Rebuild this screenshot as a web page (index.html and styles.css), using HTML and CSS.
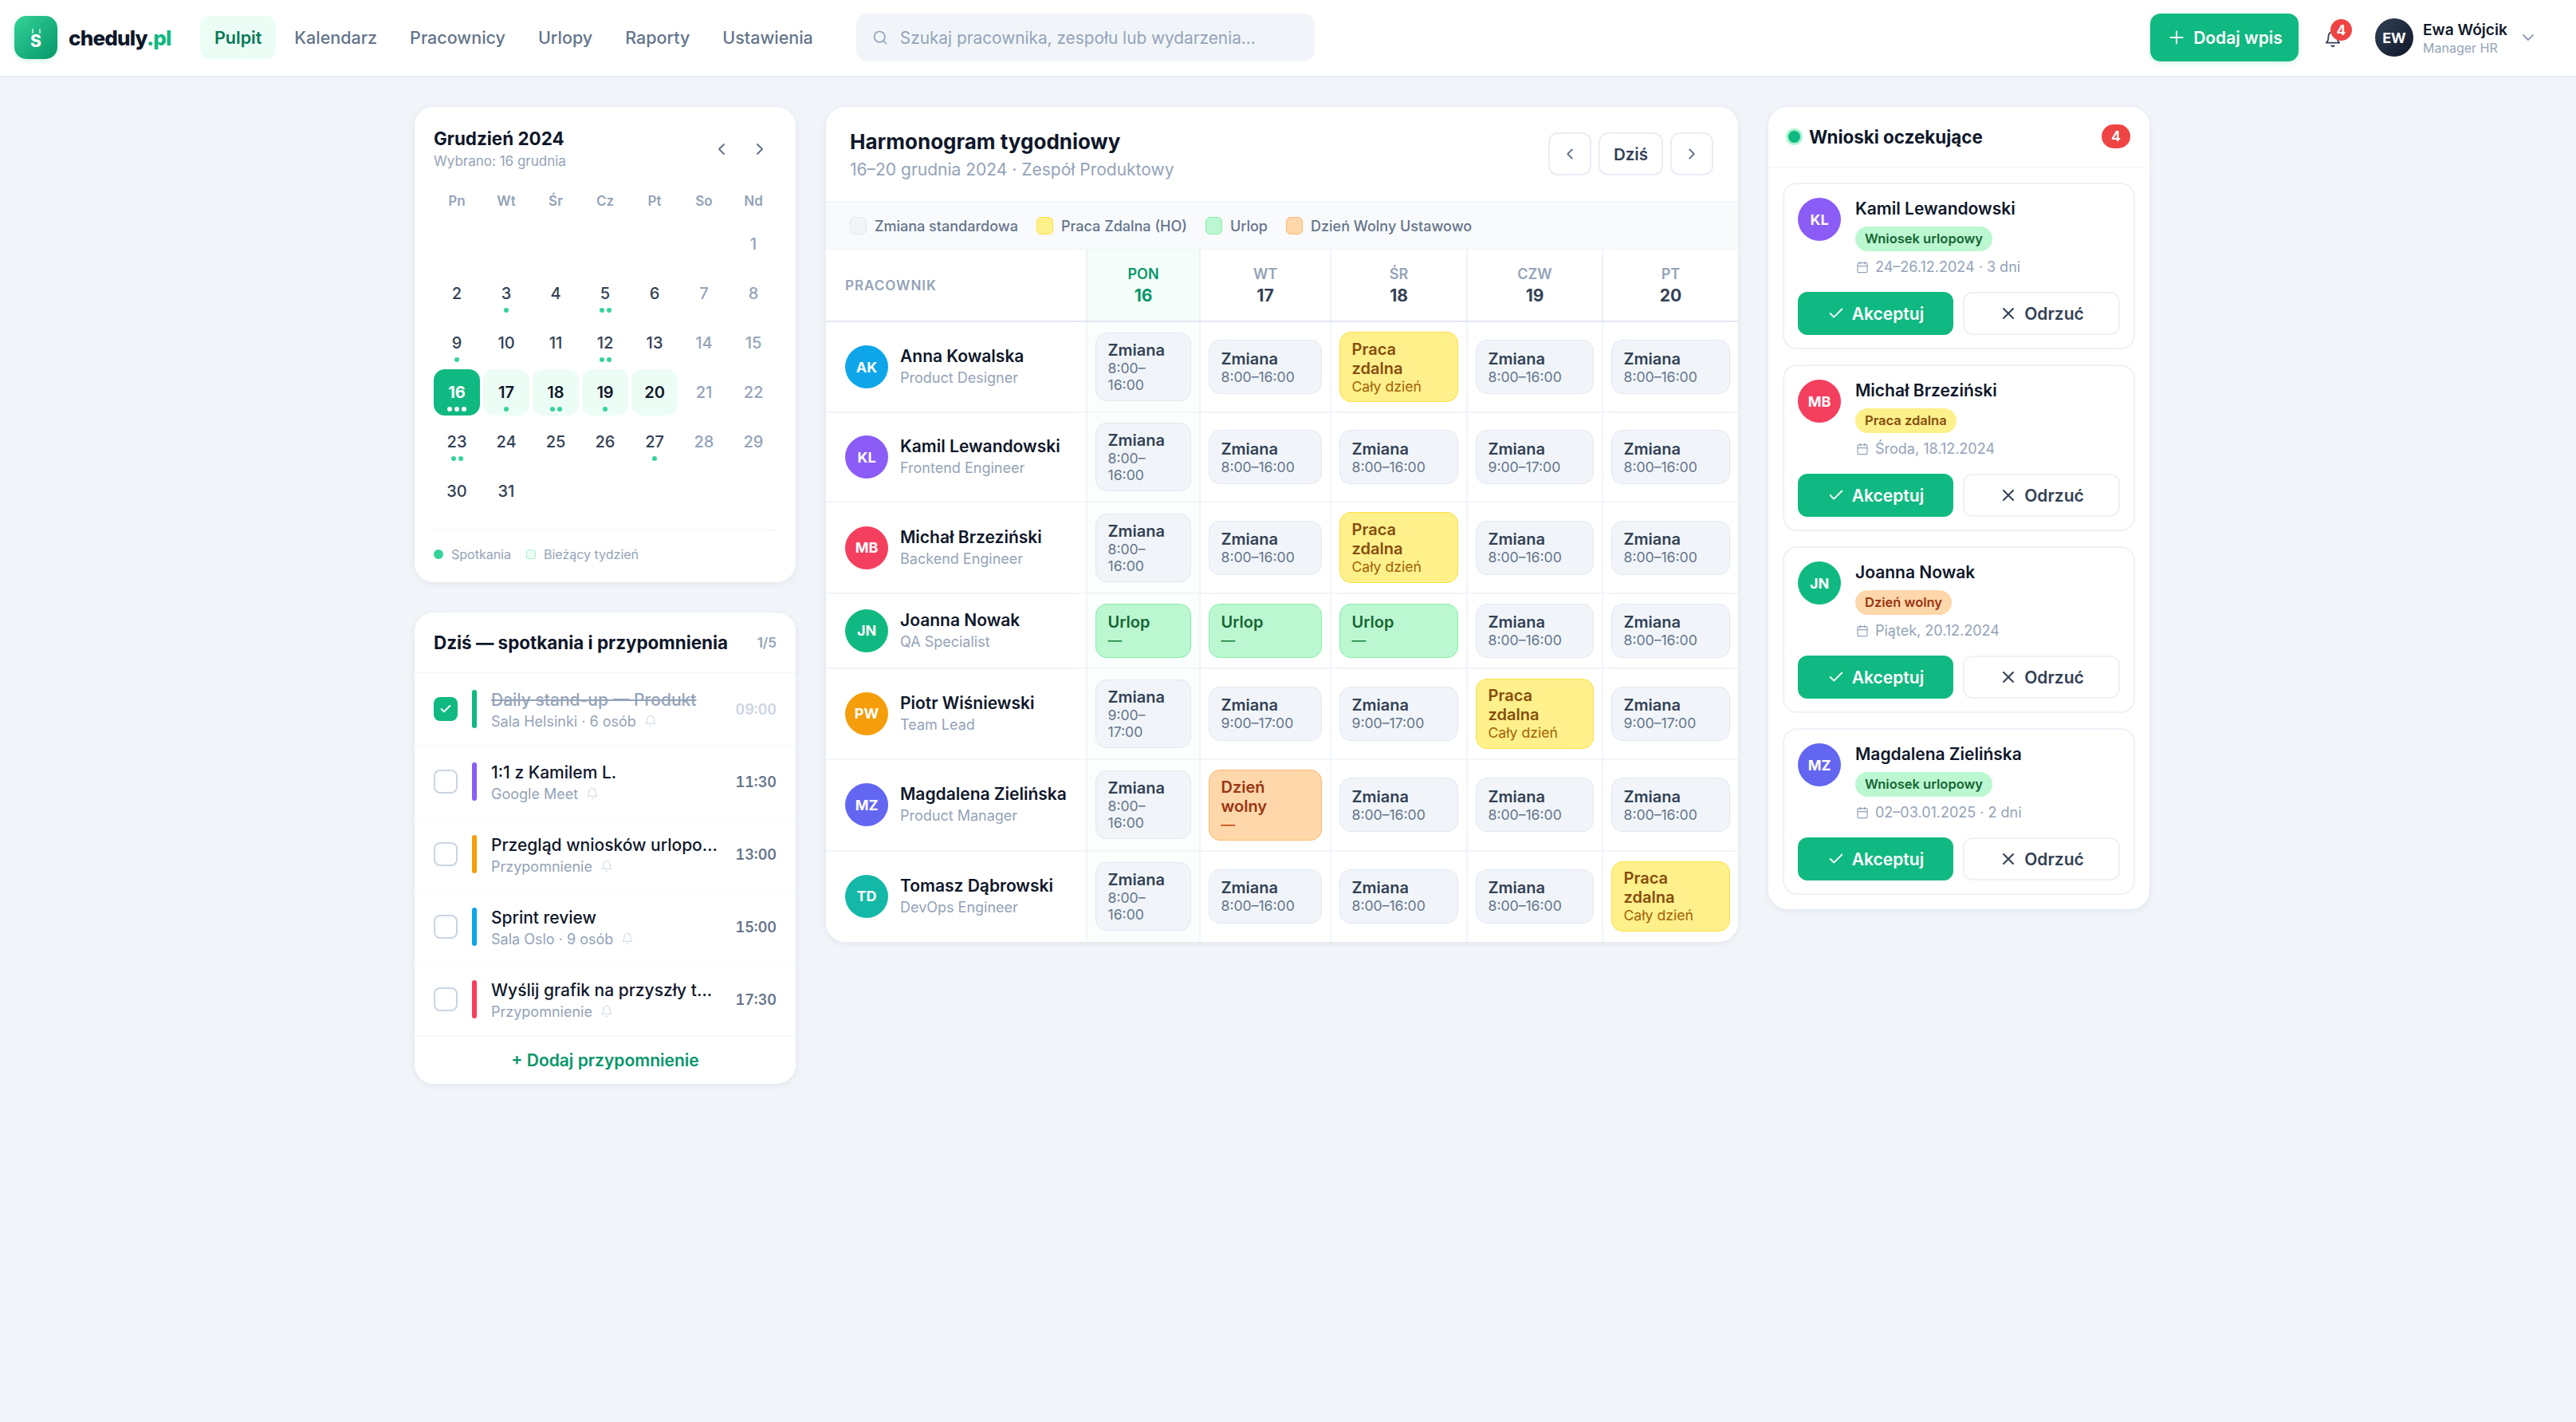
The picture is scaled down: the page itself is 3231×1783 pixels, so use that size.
FILE: index.html
```html
<!DOCTYPE html>
<html lang="pl">
  <head>
    <meta charset="UTF-8" />
    <meta name="viewport" content="width=device-width, initial-scale=1.0" />
    <title>cheduly.pl</title>
    <link rel="stylesheet" href="styles.css">
  </head>
  <body>
    <svg class="sprite" width="0" height="0">
      <symbol id="i-bell" viewBox="0 0 24 24"><path d="M6 8a6 6 0 0 1 12 0c0 7 3 9 3 9H3s3-2 3-9"/><path d="M10.3 21a1.9 1.9 0 0 0 3.4 0"/></symbol>
      <symbol id="i-cal" viewBox="0 0 24 24"><rect x="3" y="4" width="18" height="18" rx="2"/><path d="M16 2v4M8 2v4M3 10h18"/></symbol>
      <symbol id="i-check" viewBox="0 0 24 24"><path d="M20 6 9 17l-5-5"/></symbol>
      <symbol id="i-x" viewBox="0 0 24 24"><path d="M18 6 6 18M6 6l12 12"/></symbol>
      <symbol id="i-left" viewBox="0 0 24 24"><path d="m15 18-6-6 6-6"/></symbol>
      <symbol id="i-right" viewBox="0 0 24 24"><path d="m9 18 6-6-6-6"/></symbol>
    </svg>

    <header class="topbar">
      <div class="logo-mark"><span class="logo-ticks"></span><span class="logo-s">S</span></div>
      <div class="logo-text">cheduly<span>.pl</span></div>
      <nav class="nav">
        <a class="nav-link active">Pulpit</a>
        <a class="nav-link">Kalendarz</a>
        <a class="nav-link">Pracownicy</a>
        <a class="nav-link">Urlopy</a>
        <a class="nav-link">Raporty</a>
        <a class="nav-link">Ustawienia</a>
      </nav>
      <div class="search">
        <svg class="search-icon" viewBox="0 0 24 24"><circle cx="11" cy="11" r="8"/><path d="m21 21-4.3-4.3"/></svg>
        <span>Szukaj pracownika, zespołu lub wydarzenia...</span>
      </div>
      <button class="add-btn"><svg viewBox="0 0 24 24"><path d="M12 5v14M5 12h14"/></svg>Dodaj wpis</button>
      <div class="bell">
        <svg><use href="#i-bell"/></svg>
        <span class="bell-badge">4</span>
      </div>
      <div class="avatar user-avatar">EW</div>
      <div class="user-text">
        <div class="user-name">Ewa Wójcik</div>
        <div class="user-role">Manager HR</div>
      </div>
      <svg class="user-chevron" viewBox="0 0 24 24"><path d="m6 9 6 6 6-6"/></svg>
    </header>

    <main class="page">
      <div class="left-col">
        <section class="card calendar">
          <div class="cal-head">
            <div>
              <div class="cal-title">Grudzień 2024</div>
              <div class="cal-sub">Wybrano: 16 grudnia</div>
            </div>
            <div class="cal-nav">
              <svg><use href="#i-left"/></svg>
              <svg><use href="#i-right"/></svg>
            </div>
          </div>
          <div class="cal-grid">
            <div class="cal-dow">Pn</div><div class="cal-dow">Wt</div><div class="cal-dow">Śr</div><div class="cal-dow">Cz</div><div class="cal-dow">Pt</div><div class="cal-dow">So</div><div class="cal-dow">Nd</div>

            <div class="day"></div><div class="day"></div><div class="day"></div><div class="day"></div><div class="day"></div><div class="day"></div>
            <div class="day off">1</div>

            <div class="day">2</div>
            <div class="day">3<span class="dots"><i></i></span></div>
            <div class="day">4</div>
            <div class="day">5<span class="dots"><i></i><i></i></span></div>
            <div class="day">6</div>
            <div class="day off">7</div>
            <div class="day off">8</div>

            <div class="day">9<span class="dots"><i></i></span></div>
            <div class="day">10</div>
            <div class="day">11</div>
            <div class="day">12<span class="dots"><i></i><i></i></span></div>
            <div class="day">13</div>
            <div class="day off">14</div>
            <div class="day off">15</div>

            <div class="day today">16<span class="dots"><i></i><i></i><i></i></span></div>
            <div class="day week">17<span class="dots"><i></i></span></div>
            <div class="day week">18<span class="dots"><i></i><i></i></span></div>
            <div class="day week">19<span class="dots"><i></i></span></div>
            <div class="day week">20</div>
            <div class="day off">21</div>
            <div class="day off">22</div>

            <div class="day">23<span class="dots"><i></i><i></i></span></div>
            <div class="day">24</div>
            <div class="day">25</div>
            <div class="day">26</div>
            <div class="day">27<span class="dots"><i></i></span></div>
            <div class="day off">28</div>
            <div class="day off">29</div>

            <div class="day">30</div>
            <div class="day">31</div>
          </div>
          <div class="cal-legend">
            <span class="cal-key"><i class="key-dot"></i>Spotkania</span>
            <span class="cal-key"><i class="key-box"></i>Bieżący tydzień</span>
          </div>
        </section>

        <section class="card today-card">
          <div class="today-head">
            <div class="today-title">Dziś — spotkania i przypomnienia</div>
            <div class="today-count">1/5</div>
          </div>
          <div class="task done">
            <span class="check checked"><svg><use href="#i-check"/></svg></span>
            <span class="task-bar bar-green"></span>
            <div class="task-body">
              <div class="task-title">Daily stand-up — Produkt</div>
              <div class="task-sub">Sala Helsinki · 6 osób <svg><use href="#i-bell"/></svg></div>
            </div>
            <div class="task-time">09:00</div>
          </div>
          <div class="task">
            <span class="check"></span>
            <span class="task-bar bar-purple"></span>
            <div class="task-body">
              <div class="task-title">1:1 z Kamilem L.</div>
              <div class="task-sub">Google Meet <svg><use href="#i-bell"/></svg></div>
            </div>
            <div class="task-time">11:30</div>
          </div>
          <div class="task">
            <span class="check"></span>
            <span class="task-bar bar-amber"></span>
            <div class="task-body">
              <div class="task-title">Przegląd wniosków urlopo…</div>
              <div class="task-sub">Przypomnienie <svg><use href="#i-bell"/></svg></div>
            </div>
            <div class="task-time">13:00</div>
          </div>
          <div class="task">
            <span class="check"></span>
            <span class="task-bar bar-blue"></span>
            <div class="task-body">
              <div class="task-title">Sprint review</div>
              <div class="task-sub">Sala Oslo · 9 osób <svg><use href="#i-bell"/></svg></div>
            </div>
            <div class="task-time">15:00</div>
          </div>
          <div class="task">
            <span class="check"></span>
            <span class="task-bar bar-rose"></span>
            <div class="task-body">
              <div class="task-title">Wyślij grafik na przyszły t…</div>
              <div class="task-sub">Przypomnienie <svg><use href="#i-bell"/></svg></div>
            </div>
            <div class="task-time">17:30</div>
          </div>
          <div class="today-foot">+ Dodaj przypomnienie</div>
        </section>
      </div>

      <section class="card schedule">
        <div class="sch-head">
          <div>
            <div class="sch-title">Harmonogram tygodniowy</div>
            <div class="sch-sub">16–20 grudnia 2024 · Zespół Produktowy</div>
          </div>
          <div class="sch-nav">
            <button class="nav-btn"><svg><use href="#i-left"/></svg></button>
            <button class="nav-btn today-btn">Dziś</button>
            <button class="nav-btn"><svg><use href="#i-right"/></svg></button>
          </div>
        </div>
        <div class="sch-legend">
          <span class="sch-key"><i class="swatch sw-std"></i>Zmiana standardowa</span>
          <span class="sch-key"><i class="swatch sw-ho"></i>Praca Zdalna (HO)</span>
          <span class="sch-key"><i class="swatch sw-leave"></i>Urlop</span>
          <span class="sch-key"><i class="swatch sw-off"></i>Dzień Wolny Ustawowo</span>
        </div>

        <div class="row row-head">
          <div class="th th-first">PRACOWNIK</div>
          <div class="th th-now"><span>PON</span><b>16</b></div>
          <div class="th"><span>WT</span><b>17</b></div>
          <div class="th"><span>ŚR</span><b>18</b></div>
          <div class="th"><span>CZW</span><b>19</b></div>
          <div class="th"><span>PT</span><b>20</b></div>
        </div>

        <div class="row">
          <div class="person"><div class="avatar av-sky">AK</div><div><div class="person-name">Anna Kowalska</div><div class="person-role">Product Designer</div></div></div>
          <div class="td td-now"><div class="chip chip-std chip-narrow"><b>Zmiana</b><span>8:00–16:00</span></div></div>
          <div class="td"><div class="chip chip-std"><b>Zmiana</b><span>8:00–16:00</span></div></div>
          <div class="td"><div class="chip chip-ho"><b>Praca zdalna</b><span>Cały dzień</span></div></div>
          <div class="td"><div class="chip chip-std"><b>Zmiana</b><span>8:00–16:00</span></div></div>
          <div class="td"><div class="chip chip-std"><b>Zmiana</b><span>8:00–16:00</span></div></div>
        </div>

        <div class="row">
          <div class="person"><div class="avatar av-violet">KL</div><div><div class="person-name">Kamil Lewandowski</div><div class="person-role">Frontend Engineer</div></div></div>
          <div class="td td-now"><div class="chip chip-std chip-narrow"><b>Zmiana</b><span>8:00–16:00</span></div></div>
          <div class="td"><div class="chip chip-std"><b>Zmiana</b><span>8:00–16:00</span></div></div>
          <div class="td"><div class="chip chip-std"><b>Zmiana</b><span>8:00–16:00</span></div></div>
          <div class="td"><div class="chip chip-std"><b>Zmiana</b><span>9:00–17:00</span></div></div>
          <div class="td"><div class="chip chip-std"><b>Zmiana</b><span>8:00–16:00</span></div></div>
        </div>

        <div class="row">
          <div class="person"><div class="avatar av-rose">MB</div><div><div class="person-name">Michał Brzeziński</div><div class="person-role">Backend Engineer</div></div></div>
          <div class="td td-now"><div class="chip chip-std chip-narrow"><b>Zmiana</b><span>8:00–16:00</span></div></div>
          <div class="td"><div class="chip chip-std"><b>Zmiana</b><span>8:00–16:00</span></div></div>
          <div class="td"><div class="chip chip-ho"><b>Praca zdalna</b><span>Cały dzień</span></div></div>
          <div class="td"><div class="chip chip-std"><b>Zmiana</b><span>8:00–16:00</span></div></div>
          <div class="td"><div class="chip chip-std"><b>Zmiana</b><span>8:00–16:00</span></div></div>
        </div>

        <div class="row">
          <div class="person"><div class="avatar av-green">JN</div><div><div class="person-name">Joanna Nowak</div><div class="person-role">QA Specialist</div></div></div>
          <div class="td td-now"><div class="chip chip-leave"><b>Urlop</b><span>—</span></div></div>
          <div class="td"><div class="chip chip-leave"><b>Urlop</b><span>—</span></div></div>
          <div class="td"><div class="chip chip-leave"><b>Urlop</b><span>—</span></div></div>
          <div class="td"><div class="chip chip-std"><b>Zmiana</b><span>8:00–16:00</span></div></div>
          <div class="td"><div class="chip chip-std"><b>Zmiana</b><span>8:00–16:00</span></div></div>
        </div>

        <div class="row">
          <div class="person"><div class="avatar av-amber">PW</div><div><div class="person-name">Piotr Wiśniewski</div><div class="person-role">Team Lead</div></div></div>
          <div class="td td-now"><div class="chip chip-std chip-narrow"><b>Zmiana</b><span>9:00–17:00</span></div></div>
          <div class="td"><div class="chip chip-std"><b>Zmiana</b><span>9:00–17:00</span></div></div>
          <div class="td"><div class="chip chip-std"><b>Zmiana</b><span>9:00–17:00</span></div></div>
          <div class="td"><div class="chip chip-ho"><b>Praca zdalna</b><span>Cały dzień</span></div></div>
          <div class="td"><div class="chip chip-std"><b>Zmiana</b><span>9:00–17:00</span></div></div>
        </div>

        <div class="row">
          <div class="person"><div class="avatar av-indigo">MZ</div><div><div class="person-name">Magdalena Zielińska</div><div class="person-role">Product Manager</div></div></div>
          <div class="td td-now"><div class="chip chip-std chip-narrow"><b>Zmiana</b><span>8:00–16:00</span></div></div>
          <div class="td"><div class="chip chip-off"><b>Dzień wolny</b><span>—</span></div></div>
          <div class="td"><div class="chip chip-std"><b>Zmiana</b><span>8:00–16:00</span></div></div>
          <div class="td"><div class="chip chip-std"><b>Zmiana</b><span>8:00–16:00</span></div></div>
          <div class="td"><div class="chip chip-std"><b>Zmiana</b><span>8:00–16:00</span></div></div>
        </div>

        <div class="row row-last">
          <div class="person"><div class="avatar av-teal">TD</div><div><div class="person-name">Tomasz Dąbrowski</div><div class="person-role">DevOps Engineer</div></div></div>
          <div class="td td-now"><div class="chip chip-std chip-narrow"><b>Zmiana</b><span>8:00–16:00</span></div></div>
          <div class="td"><div class="chip chip-std"><b>Zmiana</b><span>8:00–16:00</span></div></div>
          <div class="td"><div class="chip chip-std"><b>Zmiana</b><span>8:00–16:00</span></div></div>
          <div class="td"><div class="chip chip-std"><b>Zmiana</b><span>8:00–16:00</span></div></div>
          <div class="td"><div class="chip chip-ho"><b>Praca zdalna</b><span>Cały dzień</span></div></div>
        </div>
      </section>

      <section class="card requests">
        <div class="req-head">
          <span class="pulse"></span>
          <div class="req-title">Wnioski oczekujące</div>
          <span class="req-badge">4</span>
        </div>
        <div class="req-list">
          <div class="req">
            <div class="req-top">
              <div class="avatar av-violet">KL</div>
              <div>
                <div class="req-name">Kamil Lewandowski</div>
                <span class="tag tag-leave">Wniosek urlopowy</span>
                <div class="req-date"><svg><use href="#i-cal"/></svg>24–26.12.2024 · 3 dni</div>
              </div>
            </div>
            <div class="req-actions">
              <button class="btn-accept"><svg><use href="#i-check"/></svg>Akceptuj</button>
              <button class="btn-reject"><svg><use href="#i-x"/></svg>Odrzuć</button>
            </div>
          </div>
          <div class="req">
            <div class="req-top">
              <div class="avatar av-rose">MB</div>
              <div>
                <div class="req-name">Michał Brzeziński</div>
                <span class="tag tag-ho">Praca zdalna</span>
                <div class="req-date"><svg><use href="#i-cal"/></svg>Środa, 18.12.2024</div>
              </div>
            </div>
            <div class="req-actions">
              <button class="btn-accept"><svg><use href="#i-check"/></svg>Akceptuj</button>
              <button class="btn-reject"><svg><use href="#i-x"/></svg>Odrzuć</button>
            </div>
          </div>
          <div class="req">
            <div class="req-top">
              <div class="avatar av-green">JN</div>
              <div>
                <div class="req-name">Joanna Nowak</div>
                <span class="tag tag-off">Dzień wolny</span>
                <div class="req-date"><svg><use href="#i-cal"/></svg>Piątek, 20.12.2024</div>
              </div>
            </div>
            <div class="req-actions">
              <button class="btn-accept"><svg><use href="#i-check"/></svg>Akceptuj</button>
              <button class="btn-reject"><svg><use href="#i-x"/></svg>Odrzuć</button>
            </div>
          </div>
          <div class="req">
            <div class="req-top">
              <div class="avatar av-indigo">MZ</div>
              <div>
                <div class="req-name">Magdalena Zielińska</div>
                <span class="tag tag-leave">Wniosek urlopowy</span>
                <div class="req-date"><svg><use href="#i-cal"/></svg>02–03.01.2025 · 2 dni</div>
              </div>
            </div>
            <div class="req-actions">
              <button class="btn-accept"><svg><use href="#i-check"/></svg>Akceptuj</button>
              <button class="btn-reject"><svg><use href="#i-x"/></svg>Odrzuć</button>
            </div>
          </div>
        </div>
      </section>
    </main>
  </body>
</html>
```

FILE: styles.css
```css
* {
  box-sizing: border-box;
}

html,
body {
  margin: 0;
  height: 100%;
}

body {
  background-color: #f1f5f9;
  font-family: Inter, "Noto Sans", sans-serif;
  color: #0f172a;
}

.sprite {
  position: absolute;
}

svg {
  fill: none;
  stroke: currentColor;
  stroke-width: 2;
  stroke-linecap: round;
  stroke-linejoin: round;
  flex: none;
}

button {
  font-family: inherit;
  cursor: pointer;
}

/* top bar */

.topbar {
  height: 97px;
  display: flex;
  align-items: center;
  padding: 0 0 1px 18px;
  background: white;
  border-bottom: 2px solid #e8edf4;
}

.logo-mark {
  width: 54px;
  height: 54px;
  flex: none;
  border-radius: 15px;
  background: linear-gradient(135deg, #34d399, #059669);
  box-shadow: 0 2px 6px rgba(16, 185, 129, 0.2);
  display: flex;
  flex-direction: column;
  align-items: center;
  justify-content: center;
  color: white;
}

.logo-ticks {
  width: 11px;
  height: 6px;
  margin-top: 2px;
  border-left: 2px solid rgba(255, 255, 255, 0.6);
  border-right: 2px solid rgba(255, 255, 255, 0.6);
}

.logo-s {
  font-size: 21px;
  font-weight: 800;
  line-height: 19px;
}

.logo-text {
  margin-left: 14px;
  width: 165px;
  flex: none;
  font-size: 26px;
  font-weight: 800;
  letter-spacing: -0.8px;
  color: #0f172a;
}

.logo-text span {
  color: #10b981;
}

.nav {
  display: flex;
  gap: 5px;
}

.nav-link {
  height: 54px;
  padding: 0 18px;
  border-radius: 12px;
  display: flex;
  align-items: center;
  font-size: 21.5px;
  font-weight: 500;
  color: #64748b;
}

.nav-link.active {
  background: #ecfdf5;
  color: #047857;
  font-weight: 600;
}

.search {
  width: 575px;
  height: 60px;
  margin-left: 36px;
  padding: 0 20px;
  display: flex;
  align-items: center;
  gap: 15px;
  border-radius: 14px;
  background: #f1f5f9;
  font-size: 20.8px;
  color: #94a3b8;
}

.search-icon {
  width: 20px;
  height: 20px;
}

.add-btn {
  margin-left: auto;
  width: 186px;
  height: 60px;
  display: flex;
  align-items: center;
  justify-content: center;
  gap: 8px;
  border: none;
  border-radius: 13px;
  background: #10b981;
  box-shadow: 0 2px 6px rgba(16, 185, 129, 0.2);
  color: white;
  font-size: 21px;
  font-weight: 600;
}

.add-btn svg {
  width: 26px;
  height: 26px;
  stroke-width: 1.8;
}

.bell {
  position: relative;
  width: 22px;
  height: 22px;
  margin: 4px 0 0 32px;
  color: #334155;
}

.bell svg {
  width: 22px;
  height: 22px;
  display: block;
}

.bell-badge {
  position: absolute;
  top: -14px;
  left: 8px;
  width: 27px;
  height: 27px;
  border-radius: 50%;
  background: #ef4444;
  color: white;
  font-size: 17px;
  font-weight: 700;
  display: flex;
  align-items: center;
  justify-content: center;
}

.avatar {
  width: 54px;
  height: 54px;
  border-radius: 50%;
  flex: none;
  display: flex;
  align-items: center;
  justify-content: center;
  color: white;
  font-size: 18px;
  font-weight: 700;
}

.user-avatar {
  width: 48px;
  height: 48px;
  margin-left: 42px;
  background: linear-gradient(135deg, #334155, #0f172a);
  font-size: 18px;
}

.user-text {
  width: 108px;
  margin-left: 12px;
}

.user-name {
  font-size: 19.2px;
  font-weight: 600;
  line-height: 26px;
}

.user-role {
  font-size: 16px;
  line-height: 20px;
  color: #94a3b8;
}

.user-chevron {
  width: 24px;
  height: 24px;
  margin: 0 48px 0 12px;
  color: #94a3b8;
}

/* layout */

.page {
  display: flex;
  align-items: flex-start;
  gap: 38px;
  padding: 37px 0 0 520px;
}

.left-col {
  width: 478px;
  display: flex;
  flex-direction: column;
  gap: 38px;
}

.card {
  background: white;
  border-radius: 24px;
  box-shadow: 0 2px 8px rgba(15, 23, 42, 0.07);
}

/* calendar */

.calendar {
  padding: 24px 24px 0;
  height: 596px;
}

.cal-head {
  display: flex;
  justify-content: space-between;
}

.cal-title {
  font-size: 22.4px;
  font-weight: 700;
  line-height: 30px;
  margin-top: 1px;
}

.cal-sub {
  font-size: 17px;
  line-height: 26px;
  color: #94a3b8;
}

.cal-nav {
  display: flex;
  gap: 24px;
  margin: 17px 9px 0 0;
  color: #64748b;
}

.cal-nav svg {
  width: 24px;
  height: 24px;
}

.cal-grid {
  margin-top: 20px;
  display: grid;
  grid-template-columns: repeat(7, 58px);
  grid-template-rows: 38px repeat(6, 58px);
  gap: 4px;
}

.cal-dow {
  text-align: center;
  font-size: 17px;
  font-weight: 600;
  line-height: 34px;
  color: #94a3b8;
}

.day {
  position: relative;
  border-radius: 14px;
  text-align: center;
  font-size: 20px;
  font-weight: 500;
  line-height: 58px;
  color: #334155;
}

.day.off {
  color: #94a3b8;
}

.day.week {
  background: #ecfdf5;
  color: #0f172a;
  font-weight: 600;
}

.day.today {
  background: #10b981;
  color: white;
  font-weight: 700;
}

.dots {
  position: absolute;
  left: 0;
  right: 0;
  bottom: 5px;
  display: flex;
  justify-content: center;
  gap: 3px;
}

.dots i {
  width: 6px;
  height: 6px;
  border-radius: 50%;
  background: #34d399;
}

.today .dots i {
  background: white;
}

.cal-legend {
  margin-top: 19px;
  padding-top: 20px;
  border-top: 1px solid #f1f5f9;
  display: flex;
  gap: 19px;
  font-size: 16px;
  color: #94a3b8;
}

.cal-key {
  display: flex;
  align-items: center;
  gap: 10px;
}

.key-dot {
  width: 12px;
  height: 12px;
  border-radius: 50%;
  background: #34d399;
}

.key-box {
  width: 12px;
  height: 12px;
  border-radius: 3px;
  background: #ecfdf5;
  border: 1px solid #a7f3d0;
}

/* today list */

.today-head {
  height: 76px;
  padding: 0 24px;
  display: flex;
  align-items: center;
  justify-content: space-between;
  border-bottom: 1px solid #f1f5f9;
}

.today-title {
  font-size: 22.4px;
  font-weight: 700;
}

.today-count {
  font-size: 17px;
  font-weight: 600;
  color: #94a3b8;
}

.task {
  height: 91px;
  padding: 0 24px;
  display: flex;
  align-items: center;
  border-bottom: 1px solid #f8fafc;
}

.check {
  width: 30px;
  height: 30px;
  flex: none;
  border: 2px solid #cbd5e1;
  border-radius: 8px;
  display: flex;
  align-items: center;
  justify-content: center;
}

.check.checked {
  background: #10b981;
  border-color: #10b981;
  color: white;
}

.check svg {
  width: 16px;
  height: 16px;
  stroke-width: 3;
}

.task-bar {
  width: 6px;
  height: 48px;
  flex: none;
  margin: 0 18px;
  border-radius: 3px;
}

.bar-green { background: #10b981; }
.bar-purple { background: #8b5cf6; }
.bar-amber { background: #f59e0b; }
.bar-blue { background: #0ea5e9; }
.bar-rose { background: #f43f5e; }

.task-body {
  flex: 1;
  min-width: 0;
  padding-top: 3px;
}

.task-title {
  font-size: 21px;
  font-weight: 500;
  line-height: 27px;
  white-space: nowrap;
}

.task-sub {
  display: flex;
  align-items: center;
  gap: 10px;
  font-size: 18px;
  line-height: 27px;
  color: #94a3b8;
}

.task-sub svg {
  width: 16px;
  height: 16px;
  color: #cbd5e1;
  stroke-width: 1.5;
}

.task-time {
  width: 63px;
  flex: none;
  margin-left: 10px;
  text-align: right;
  font-size: 18px;
  font-weight: 600;
  font-variant-numeric: tabular-nums;
  color: #64748b;
}

.done .task-title {
  color: #94a3b8;
  text-decoration: line-through;
}

.done .task-time {
  color: #cbd5e1;
}

.today-foot {
  height: 61px;
  border-top: 1px solid #f1f5f9;
  margin-top: -1px;
  display: flex;
  align-items: center;
  justify-content: center;
  font-size: 21px;
  font-weight: 600;
  color: #059669;
}

/* schedule */

.schedule {
  width: 1144px;
  overflow: hidden;
}

.sch-head {
  height: 120px;
  padding: 0 31px 0 30px;
  display: flex;
  align-items: center;
  justify-content: space-between;
  border-bottom: 2px solid #f1f5f9;
}

.sch-title {
  font-size: 26px;
  font-weight: 700;
  line-height: 36px;
  margin-top: 3px;
}

.sch-sub {
  font-size: 21px;
  line-height: 34px;
  color: #94a3b8;
}

.sch-nav {
  display: flex;
  gap: 9px;
}

.nav-btn {
  width: 54px;
  height: 54px;
  padding: 0;
  border: 2px solid #e9eef5;
  border-radius: 12px;
  background: white;
  color: #64748b;
  display: flex;
  align-items: center;
  justify-content: center;
}

.nav-btn svg {
  width: 22px;
  height: 22px;
}

.today-btn {
  width: 81px;
  font-size: 20.5px;
  font-weight: 600;
  color: #334155;
}

.sch-legend {
  height: 58px;
  padding: 0 30px;
  display: flex;
  align-items: center;
  gap: 23px;
  background: #f8fafc;
  font-size: 18px;
  font-weight: 500;
  color: #64748b;
}

.sch-key {
  display: flex;
  align-items: center;
  gap: 10px;
}

.swatch {
  width: 21px;
  height: 22px;
  border-radius: 6px;
  border: 1px solid;
}

.sw-std { background: #f1f5f9; border-color: #e2e8f0; }
.sw-ho { background: #fef08a; border-color: #fde047; }
.sw-leave { background: #bbf7d0; border-color: #86efac; }
.sw-off { background: #fed7aa; border-color: #fdba74; }

.row {
  display: grid;
  grid-template-columns: 326px 142px 164px 171px 170px 171px;
  border-bottom: 2px solid #f1f5f9;
}

.row-head {
  height: 92px;
  border-top: 1px solid #f1f5f9;
  border-bottom: 2px solid #e2e8f0;
}

.row-last {
  border-bottom: none;
  padding-bottom: 1px;
}

.th {
  display: flex;
  flex-direction: column;
  align-items: center;
  justify-content: center;
  border-left: 2px solid #eef2f7;
  font-size: 18px;
  font-weight: 600;
  color: #94a3b8;
}

.th span {
  line-height: 26px;
}

.th b {
  font-size: 21px;
  font-weight: 700;
  line-height: 28px;
  color: #334155;
}

.th-first {
  align-items: flex-start;
  padding-left: 24px;
  border-left: none;
  font-size: 17px;
  letter-spacing: 1px;
}

.th-now {
  background: #f4fdf9;
  color: #059669;
}

.th-now b {
  color: #059669;
}

.person {
  display: flex;
  align-items: center;
  gap: 15px;
  padding-left: 24px;
}

.person-name {
  font-size: 21px;
  font-weight: 600;
  line-height: 27px;
}

.person-role {
  font-size: 18px;
  line-height: 27px;
  color: #94a3b8;
}

.av-sky { background: #0ea5e9; }
.av-violet { background: #8b5cf6; }
.av-rose { background: #f43f5e; }
.av-green { background: #10b981; }
.av-amber { background: #f59e0b; }
.av-indigo { background: #6366f1; }
.av-teal { background: #14b8a6; }

.td {
  padding: 12px 10px;
  display: flex;
  align-items: center;
  border-left: 2px solid #f1f5f9;
}

.td-now {
  background: #fafefc;
}

.chip {
  width: 100%;
  height: 68px;
  padding: 0 14.5px;
  display: flex;
  flex-direction: column;
  justify-content: center;
  border: 1px solid;
  border-radius: 14px;
}

.chip b {
  font-size: 20px;
  font-weight: 600;
  line-height: 24px;
}

.chip span {
  font-size: 17.6px;
  line-height: 21px;
}

.chip-std {
  background: #f1f5f9;
  border-color: #e2e8f0;
}

.chip-std b {
  color: #334155;
}

.chip-std span {
  color: #64748b;
}

.chip-narrow {
  height: 86px;
}

.chip-ho,
.chip-off {
  height: 88.4px;
}

.chip-ho {
  background: #fef08a;
  border-color: #fde047;
}

.chip-ho b {
  color: #854d0e;
}

.chip-ho span {
  color: #a16207;
}

.chip-leave {
  background: #bbf7d0;
  border-color: #86efac;
  justify-content: flex-start;
  padding-top: 10px;
}

.chip-leave b {
  color: #166534;
}

.chip-leave span {
  color: #15803d;
}

.chip-off {
  background: #fed7aa;
  border-color: #fdba74;
}

.chip-off b {
  color: #9a3412;
}

.chip-off span {
  color: #c2410c;
}

/* requests */

.requests {
  width: 478px;
  padding-bottom: 18px;
}

.req-head {
  height: 77px;
  padding: 0 24px 2px 25px;
  display: flex;
  align-items: center;
  border-bottom: 1px solid #f1f5f9;
}

.pulse {
  width: 15px;
  height: 15px;
  border-radius: 50%;
  background: #10b981;
  box-shadow: 0 0 0 3px #a7f3d0;
  margin-right: 11px;
}

.req-title {
  flex: 1;
  font-size: 22.4px;
  font-weight: 700;
}

.req-badge {
  width: 36px;
  height: 30px;
  border-radius: 15px;
  background: #ef4444;
  color: white;
  font-size: 17px;
  font-weight: 700;
  display: flex;
  align-items: center;
  justify-content: center;
}

.req-list {
  padding: 18px 18px 0;
  display: flex;
  flex-direction: column;
  gap: 19px;
}

.req {
  height: 209px;
  padding: 17px;
  border: 2px solid #eef2f7;
  border-radius: 18px;
}

.req-top {
  display: flex;
  gap: 18px;
  height: 118px;
}

.req-name {
  margin-top: 1px;
  font-size: 21px;
  font-weight: 600;
  line-height: 26px;
}

.tag {
  display: inline-block;
  height: 31px;
  margin-top: 9px;
  padding: 0 12px;
  border-radius: 16px;
  font-size: 16.5px;
  font-weight: 600;
  line-height: 31px;
}

.tag-leave { background: #bbf7d0; color: #166534; }
.tag-ho { background: #fef08a; color: #854d0e; }
.tag-off { background: #fed7aa; color: #9a3412; }

.req-date {
  display: flex;
  align-items: center;
  gap: 8px;
  margin-top: 7px;
  font-size: 18px;
  line-height: 26px;
  color: #94a3b8;
}

.req-date svg {
  width: 16px;
  height: 16px;
  margin-left: 1px;
  stroke-width: 1.8;
}

.req-actions {
  display: flex;
  gap: 12px;
}

.btn-accept,
.btn-reject {
  height: 54px;
  display: flex;
  align-items: center;
  justify-content: center;
  border-radius: 12px;
  font-size: 21px;
  font-weight: 600;
}

.btn-accept {
  width: 195px;
  gap: 9px;
  border: none;
  background: #10b981;
  color: white;
}

.btn-reject {
  width: 197px;
  gap: 8px;
  border: 2px solid #eef2f7;
  background: white;
  color: #334155;
}

.btn-accept svg {
  width: 22px;
  height: 22px;
}

.btn-reject svg {
  width: 24px;
  height: 24px;
}
```
